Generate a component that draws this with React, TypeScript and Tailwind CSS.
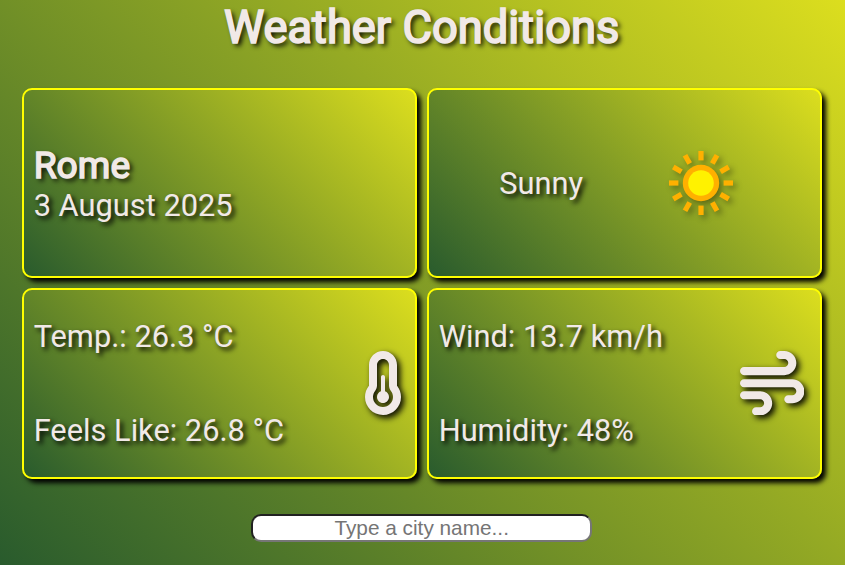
import { FaTemperatureHalf, FaWind } from "react-icons/fa6";

const card =
  "flex h-[190.4px] items-center rounded-[10px] border-2 border-[#ffff00] bg-[linear-gradient(45deg,#295b2d,#dcde1e)] px-2.5 shadow-[4px_4px_5px_#000]";

function Sun() {
  return (
    <svg
      viewBox="-32 -32 64 64"
      className="size-16 [filter:drop-shadow(3px_3px_3px_rgba(0,0,0,0.4))]"
    >
      {Array.from({ length: 12 }, (_, i) => (
        <rect key={i} x="-2.6" y="-32" width="5.2" height="9.4" fill="#ffb000" transform={`rotate(${i * 30})`} />
      ))}
      <circle r="18.2" fill="#ffb000" />
      <circle r="12.8" fill="#fff200" />
    </svg>
  );
}

export default function App() {
  return (
    <main className="flex h-[565px] flex-col items-center overflow-hidden bg-[linear-gradient(45deg,#295b2d,#dcde1e)] pr-[1.7px] font-['Roboto',sans-serif] text-[30.8px] leading-[37px] text-[#f1e9e7] [text-shadow:3px_3px_5px_#000]">
      <h1 className="h-[88px] pt-px text-[45.3px] leading-[54px] font-normal [-webkit-text-stroke:1.7px_#f1e9e7]">
        Weather Conditions
      </h1>
      <section className="grid w-[800px] grid-cols-2 gap-2.5">
        <div className={card}>
          <div className="pt-[3px]">
            <h2 className="mb-px text-[37.2px] leading-[41px] font-normal [-webkit-text-stroke:1.5px_#f1e9e7]">Rome</h2>
            <p>3 August 2025</p>
          </div>
        </div>
        <div className={`${card} gap-[86px]`}>
          <p className="pl-[60.6px]">Sunny</p>
          <Sun />
        </div>
        <div className={`${card} justify-between`}>
          <div className="flex flex-col gap-[57px]">
            <p>Temp.: 26.3 °C</p>
            <p>Feels Like: 26.8 °C</p>
          </div>
          <FaTemperatureHalf className="mr-[2px] mb-[1.2px] h-16 w-10 [filter:drop-shadow(3px_3px_3px_#000)]" />
        </div>
        <div className={`${card} justify-between`}>
          <div className="flex flex-col gap-[57px]">
            <p>Wind: 13.7 km/h</p>
            <p>Humidity: 48%</p>
          </div>
          <FaWind className="mr-[5.3px] mb-[1.2px] size-[64.4px] [filter:drop-shadow(3px_3px_3px_#000)]" />
        </div>
      </section>
      <input
        type="text"
        placeholder="Type a city name..."
        className="mt-[35.2px] h-[28px] w-[341px] rounded-[10px] border-2 [border-style:inset] border-[#767676] bg-white pb-px text-center font-['Liberation_Sans',sans-serif] text-[20.8px] text-black placeholder:text-[#757575] [text-shadow:none]"
      />
    </main>
  );
}
